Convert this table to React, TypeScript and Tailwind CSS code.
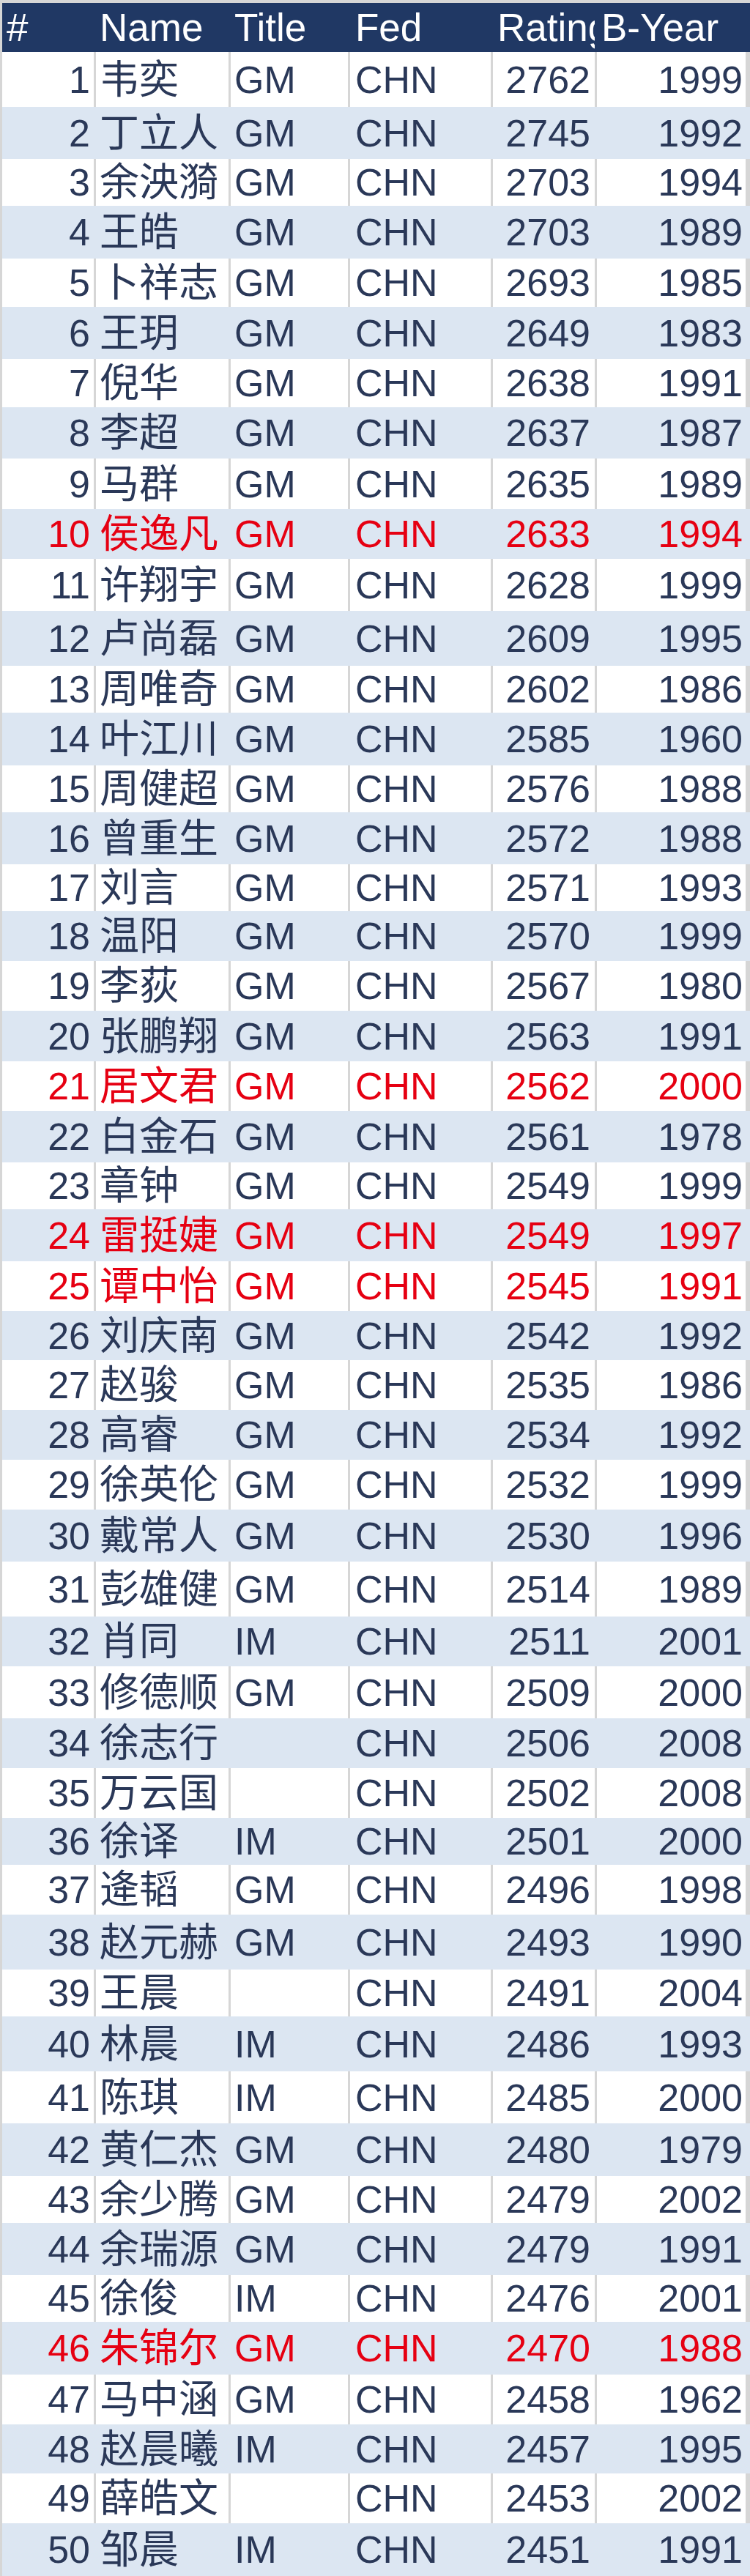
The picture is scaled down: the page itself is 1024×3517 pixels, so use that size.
const players: [string, string, number, number][] = [
  ["韦奕", "GM", 2762, 1999],
  ["丁立人", "GM", 2745, 1992],
  ["余泱漪", "GM", 2703, 1994],
  ["王皓", "GM", 2703, 1989],
  ["卜祥志", "GM", 2693, 1985],
  ["王玥", "GM", 2649, 1983],
  ["倪华", "GM", 2638, 1991],
  ["李超", "GM", 2637, 1987],
  ["马群", "GM", 2635, 1989],
  ["侯逸凡", "GM", 2633, 1994],
  ["许翔宇", "GM", 2628, 1999],
  ["卢尚磊", "GM", 2609, 1995],
  ["周唯奇", "GM", 2602, 1986],
  ["叶江川", "GM", 2585, 1960],
  ["周健超", "GM", 2576, 1988],
  ["曾重生", "GM", 2572, 1988],
  ["刘言", "GM", 2571, 1993],
  ["温阳", "GM", 2570, 1999],
  ["李荻", "GM", 2567, 1980],
  ["张鹏翔", "GM", 2563, 1991],
  ["居文君", "GM", 2562, 2000],
  ["白金石", "GM", 2561, 1978],
  ["章钟", "GM", 2549, 1999],
  ["雷挺婕", "GM", 2549, 1997],
  ["谭中怡", "GM", 2545, 1991],
  ["刘庆南", "GM", 2542, 1992],
  ["赵骏", "GM", 2535, 1986],
  ["高睿", "GM", 2534, 1992],
  ["徐英伦", "GM", 2532, 1999],
  ["戴常人", "GM", 2530, 1996],
  ["彭雄健", "GM", 2514, 1989],
  ["肖同", "IM", 2511, 2001],
  ["修德顺", "GM", 2509, 2000],
  ["徐志行", "", 2506, 2008],
  ["万云国", "", 2502, 2008],
  ["徐译", "IM", 2501, 2000],
  ["逄韬", "GM", 2496, 1998],
  ["赵元赫", "GM", 2493, 1990],
  ["王晨", "", 2491, 2004],
  ["林晨", "IM", 2486, 1993],
  ["陈琪", "IM", 2485, 2000],
  ["黄仁杰", "GM", 2480, 1979],
  ["余少腾", "GM", 2479, 2002],
  ["余瑞源", "GM", 2479, 1991],
  ["徐俊", "IM", 2476, 2001],
  ["朱锦尔", "GM", 2470, 1988],
  ["马中涵", "GM", 2458, 1962],
  ["赵晨曦", "IM", 2457, 1995],
  ["薛皓文", "", 2453, 2002],
  ["邹晨", "IM", 2451, 1991],
];

// row heights as measured off the sheet, they are not uniform
const heights = [
  75, 71, 64, 72, 66, 71, 66, 70, 69, 68,
  71, 75, 64, 72, 64, 71, 64, 68, 68, 69,
  68, 70, 64, 71, 68, 67, 68, 68, 68, 71,
  75, 68, 71, 68, 68, 64, 68, 75, 64, 75,
  71, 72, 64, 71, 64, 72, 68, 67, 68, 72,
];

const highlighted = new Set([10, 21, 24, 25, 46]);

const cols = "grid grid-cols-[125px_181px_160px_192px_139px_203px] gap-x-[3px] pr-[6px]";

function Row({ rank, player, height }: { rank: number; player: [string, string, number, number]; height: number }) {
  const [name, title, rating, year] = player;
  const striped = rank % 2 === 0;
  const color = highlighted.has(rank) ? "text-[#e60012]" : "text-[#2a3858]";
  const cell = `flex items-center overflow-hidden whitespace-nowrap ${striped ? "" : "bg-white"}`;

  return (
    <div className={`${cols} ${striped ? "bg-[#dce6f2]" : ""} ${color}`} style={{ height }}>
      <div className={`${cell} justify-end pr-[5px]`}>{rank}</div>
      <div className={`${cell} pl-[5px] text-[54px]`}>{name}</div>
      <div className={`${cell} pl-[5px]`}>{title}</div>
      <div className={`${cell} pl-[7px]`}>CHN</div>
      <div className={`${cell} justify-end pr-[6px]`}>{rating}</div>
      <div className={`${cell} justify-end pr-[4px]`}>{year}</div>
    </div>
  );
}

export default function App() {
  return (
    <div className="w-[1024px] bg-[#d6d6d6] pt-[4px] pl-[3px] font-['Liberation_Sans','Noto_Sans_CJK_SC',sans-serif] text-[52px] leading-none">
      <div className={`${cols} h-[67px] bg-[#203864] text-[53px] text-white`}>
        <div className="flex items-center pl-[6px]">#</div>
        <div className="flex items-center pl-[5px]">Name</div>
        <div className="flex items-center pl-[5px]">Title</div>
        <div className="flex items-center pl-[7px]">Fed</div>
        {/* the sheet cuts this header off at the column edge */}
        <div className="flex items-center overflow-hidden whitespace-nowrap pl-[6px]">Rating</div>
        <div className="flex items-center whitespace-nowrap pl-[6px]">B-Year</div>
      </div>
      {players.map((p, i) => (
        <Row key={i} rank={i + 1} player={p} height={heights[i]} />
      ))}
    </div>
  );
}
